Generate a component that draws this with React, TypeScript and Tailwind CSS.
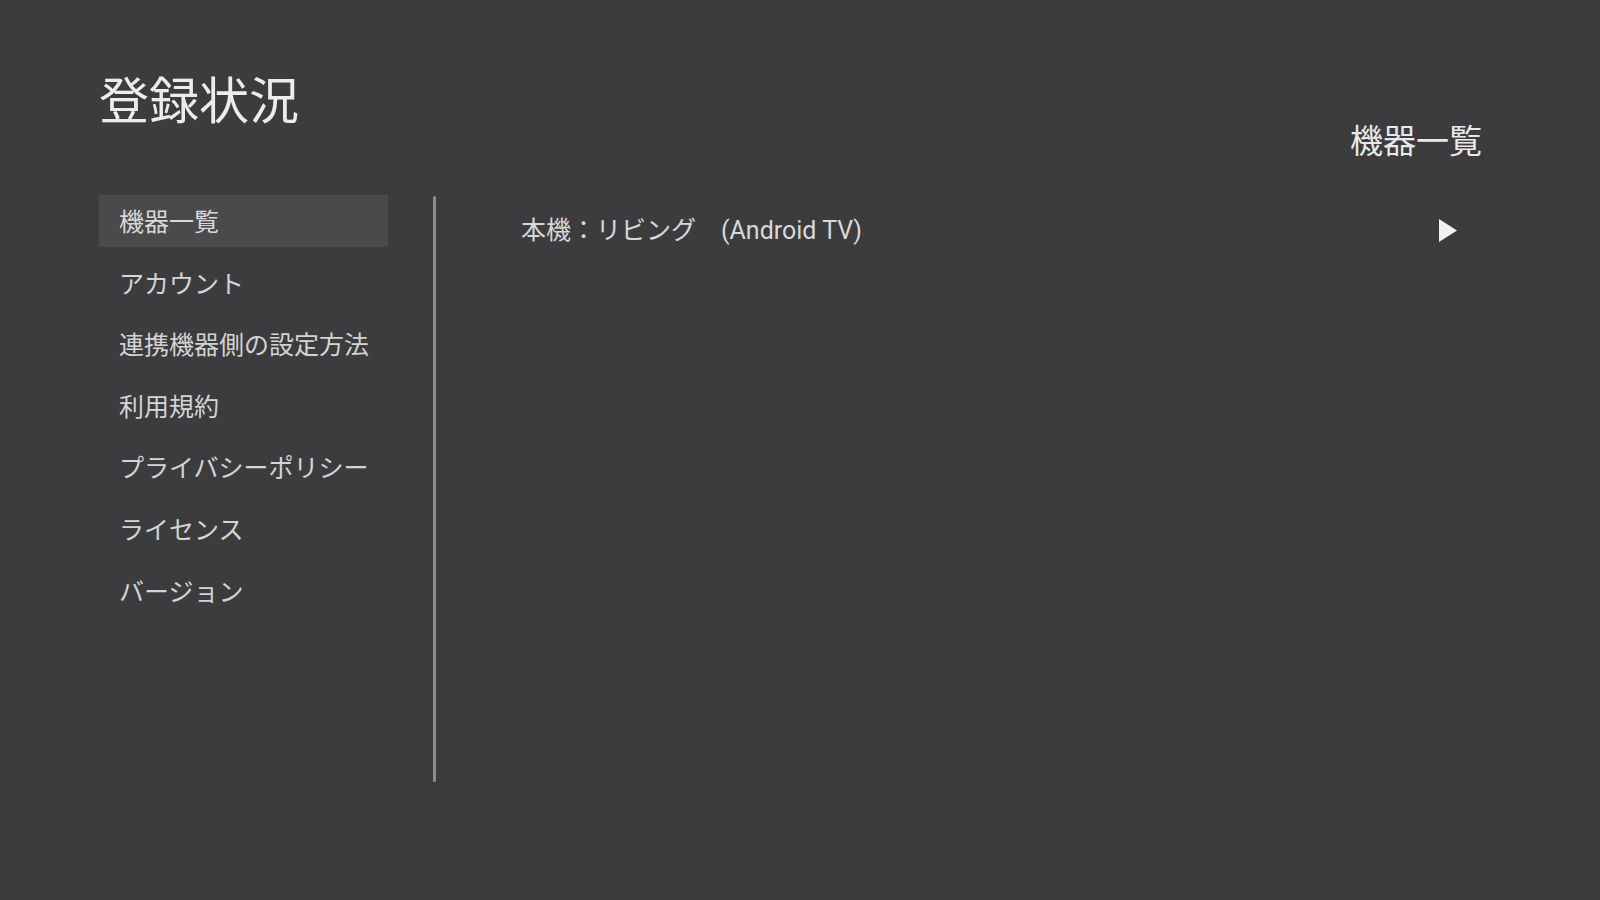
import React from "react";

const menu = [
  "機器一覧",
  "アカウント",
  "連携機器側の設定方法",
  "利用規約",
  "プライバシーポリシー",
  "ライセンス",
  "バージョン",
];

export default function App() {
  return (
    <div
      className="w-[1600px] h-[900px] bg-[#3c3c3e] text-[#d6d6d6] overflow-hidden"
      style={{ fontFamily: '"Noto Sans CJK JP", "Noto Sans", sans-serif' }}
    >
      <div className="pl-[99px] pr-[118px] pt-[68px]">
        <div className="flex items-start justify-between">
          <h1 className="text-[50px] leading-[58px] text-[#ececec]">登録状況</h1>
          <div className="mt-[51px] text-[33px] leading-[40px] text-[#e8e8e8]">機器一覧</div>
        </div>
        <div className="flex mt-[36px]">
          <nav className="w-[289px] flex flex-col gap-[9.6px]">
            {menu.map((m, i) => (
              <div
                key={m}
                className={
                  "h-[52px] flex items-center pl-[20px] pb-[1px] text-[25px] leading-none " +
                  (i === 0 ? "bg-[#4a4a4c] text-[#d8d8d8]" : "text-[#d4d4d4]")
                }
              >
                {m}
              </div>
            ))}
          </nav>
          <div className="ml-[45px] mt-[1px] w-[3px] h-[586px] bg-[#8c8c8c] rounded-full" />
          <div className="flex-1 pl-[85px] pr-[24px] pt-[14px]">
            <div className="h-[42px] flex items-center justify-between">
              <span
                className="text-[25px] leading-none text-[#d8d8d8]"
                style={{ fontFamily: 'Roboto, "Noto Sans CJK JP", sans-serif' }}
              >
                本機：リビング　(Android TV)
              </span>
              <svg width="20" height="25" viewBox="0 0 20 25" className="block">
                <path d="M1 1 L19 12.5 L1 24 Z" fill="#f2f2f2" />
              </svg>
            </div>
          </div>
        </div>
      </div>
    </div>
  );
}
